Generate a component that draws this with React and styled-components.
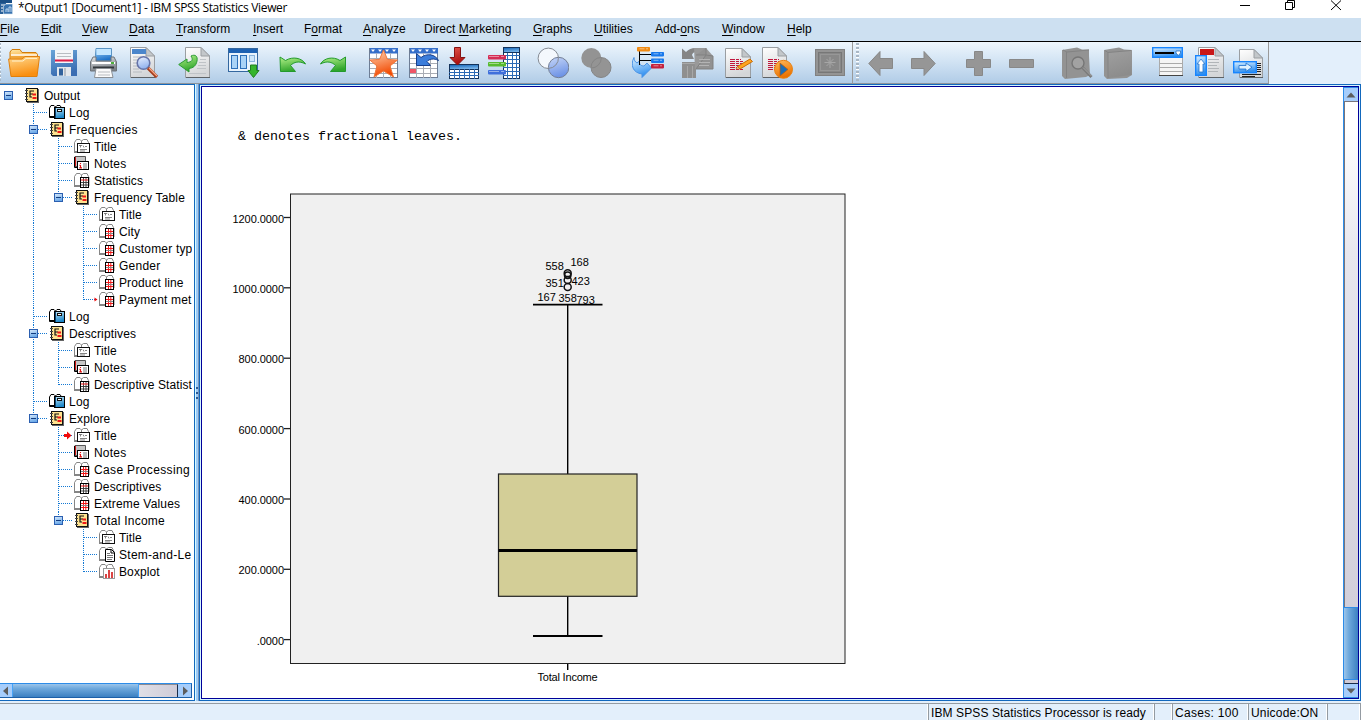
import React from "react";
import styled, { createGlobalStyle } from "styled-components";

const GlobalStyle = createGlobalStyle`
  html, body { margin: 0; padding: 0; background: #fff; overflow: hidden; }
  * { box-sizing: border-box; }
  svg { display: block; flex: none; }
`;

const Window = styled.div`
  width: 1361px;
  height: 720px;
  display: flex;
  flex-direction: column;
  overflow: hidden;
  background: #e3effb;
  font-family: "Liberation Sans", Arial, sans-serif;
  font-size: 12px;
  color: #000;
`;

const TitleBar = styled.header`
  height: 18px;
  flex: none;
  display: flex;
  background: #fff;
`;

const TitleText = styled.div`
  margin-left: 4px;
  flex: 1;
  font-family: "Open Sans", "Noto Sans", sans-serif;
  font-size: 12px;
  line-height: 16px;
  letter-spacing: -0.33px;
  white-space: nowrap;
`;

const MenuBar = styled.nav`
  height: 24px;
  flex: none;
  display: flex;
  background: #cde0f1;
  border-bottom: 1px solid #000;
`;

const MenuItem = styled.div`
  width: ${(p) => p.$w}px;
  flex: none;
  line-height: 23px;
  font-size: 12px;
  white-space: nowrap;
  u { text-underline-offset: 2px; text-decoration-thickness: 1px; text-decoration-skip-ink: none; }
`;

const ToolRow = styled.div`
  height: 42px;
  flex: none;
  display: flex;
`;

const ToolBar = styled.div`
  width: ${(p) => p.$w}px;
  height: 42px;
  flex: none;
  display: flex;
  padding-top: 5px;
  background: linear-gradient(#eef6fd, #d3e4f4 45%, #b1cce7);
  border-right: 1px solid #9a9a9a;
  border-bottom: 1px solid #8f9499;
  overflow: hidden;
`;

const Grip = styled.div`
  width: 3px;
  height: 38px;
  margin: -4px 0 0 ${(p) => p.$left}px;
  flex: none;
  background: repeating-linear-gradient(#a9b7c5 0 2px, #fff 2px 3px, transparent 3px 4px);
`;

const ToolButton = styled.div`
  width: 32px;
  height: 32px;
  flex: none;
  margin-left: ${(p) => p.$gap}px;
`;

const Workspace = styled.main`
  height: 617px;
  flex: none;
  display: flex;
`;

const OutlinePane = styled.aside`
  width: 195px;
  flex: none;
  display: flex;
  flex-direction: column;
  background: #fff;
  border: solid #1268bd;
  border-width: 1px 1px 1px 0;
  padding: 2px 2px 2px 0;
`;

const Tree = styled.div`
  flex: 1;
  overflow: hidden;
`;

const TreeRow = styled.div`
  height: 17px;
  display: flex;
  overflow: hidden;
`;

const IconCell = styled.div`
  width: ${(p) => (p.$root ? 20 : 20)}px;
  margin-left: -1px;
  flex: none;
`;

const Label = styled.div`
  font-size: 12px;
  line-height: 18px;
  letter-spacing: ${(p) => p.$ls}px;
  white-space: nowrap;
`;

const HScroll = styled.div`
  height: 15px;
  flex: none;
  display: flex;
  border: 1px solid #1b5fa8;
  border-top-color: #2d8ce8;
  border-left: 0;
`;

const ScrollButton = styled.div`
  flex: none;
  display: flex;
  align-items: center;
  justify-content: center;
  background: #a6cdfb;
`;

const HThumb = styled.div`
  width: 127px;
  flex: none;
  border: solid #47a3f7;
  border-width: 0 1px;
  background: linear-gradient(#9cc5ea, #6ea8dc 35%, #3c80c1);
`;

const HTrack = styled.div`
  flex: 1;
  border-top: 1px solid #8d8b92;
  border-right: 1px solid #1b2d49;
  background: linear-gradient(90deg, #e0dfe6, #cfcbd7);
`;

const Splitter = styled.div`
  width: 4px;
  flex: none;
  display: flex;
  flex-direction: column;
  justify-content: center;
  background: linear-gradient(90deg, #d9fbff 0 1px, #9ccaf8 1px 3px, #7795b9 3px);
`;

const ViewerPane = styled.section`
  flex: 1;
  display: flex;
  border: 1px solid #1268bd;
  padding: 1px;
  background: #d6f6ff;
`;

const ViewerFrame = styled.div`
  flex: 1;
  display: flex;
  border: 1px solid #000099;
  background: #fff;
`;

const Document = styled.div`
  flex: 1;
  padding: 42px 0 0 20px;
  overflow: hidden;
`;

const MonoLine = styled.pre`
  margin: 0 0 0 16px;
  height: 55px;
  font-family: "Liberation Mono", "Courier New", monospace;
  font-size: 13.33px;
  line-height: 16px;
`;

const VScroll = styled.div`
  width: 15px;
  flex: none;
  display: flex;
  flex-direction: column;
  border: 1px solid #2d8ce8;
  border-right-width: 0;
`;

const VTrack = styled.div`
  flex: ${(p) => (p.$h ? "none" : 1)};
  height: ${(p) => (p.$h ? p.$h + "px" : "auto")};
  border-left: 1px solid #77757c;
  border-top: ${(p) => (p.$h ? 0 : 1)}px solid #77757c;
  border-bottom: ${(p) => (p.$h ? 1 : 0)}px solid #1b2d49;
  background: ${(p) => (p.$h ? "#cfcbd7" : "linear-gradient(#fff 0 5%, #e8e7ee 30%, #d2cfda)")};
`;

const VThumb = styled.div`
  height: 73px;
  flex: none;
  border: solid #2d8ce8;
  border-width: 1px 0;
  background: linear-gradient(90deg, #9cc5ea, #6ea8dc 35%, #3c80c1);
`;

const StatusBar = styled.footer`
  height: 19px;
  flex: none;
  display: flex;
  padding-top: 2px;
`;

const StatusCell = styled.div`
  width: ${(p) => p.$w}px;
  flex: none;
  padding-left: 2px;
  border: solid #949ba2;
  border-width: 1px 0 0 ${(p) => (p.$first ? 0 : 1)}px;
  box-shadow: inset -1px 0 #fff;
  line-height: 18px;
  letter-spacing: ${(p) => p.$ls || 0}px;
  white-space: nowrap;
`;

const menus = [
  ["", "F", "ile", 41], ["", "E", "dit", 41], ["", "V", "iew", 47], ["", "D", "ata", 47],
  ["", "T", "ransform", 77], ["", "I", "nsert", 51], ["F", "o", "rmat", 59], ["", "A", "nalyze", 61],
  ["Direct ", "M", "arketing", 109], ["", "G", "raphs", 61], ["", "U", "tilities", 61],
  ["Add-", "o", "ns", 67], ["", "W", "indow", 65], ["", "H", "elp", 60],
];

const Gradients = styled.svg`
  position: absolute;
`;

const Defs = () => (
  <Gradients width="0" height="0" aria-hidden="true">
    <defs>
      {[
        ["gFolder", "#ffe9a8", "#f59312"], ["gFront", "#ffd98f", "#f98f10"], ["gBlue", "#a9d8fb", "#1f73c9"],
        ["gGreen", "#b6f28b", "#2fa52b"], ["gPaper", "#ffffff", "#d4d6d8"], ["gStar", "#ffd8b8", "#f24800"],
        ["gHead", "#0a5fb5", "#7db7ea"], ["gRed", "#e4574c", "#a90e0e"], ["gSave", "#6ba5d8", "#3a6db2"],
        ["gLens", "#eaf2ff", "#92b2ee"], ["gVenn", "#c7d7f8", "#6f94e6"], ["gOrange", "#ffb95a", "#ea7100"],
        ["gCyan", "#dff2ff", "#2f8ff0"], ["gGrey", "#a0a0a0", "#8c8c8c"], ["gPrint", "#e2e4e6", "#7b8187"],
        ["gBook", "#c9ecfb", "#1c86c8"], ["gTog", "#dcecfc", "#6aa8e8"],
      ].map(([id, a, b]) => (
        <linearGradient key={id} id={id} x1="0" y1="0" x2="0.3" y2="1">
          <stop offset="0" stopColor={a} />
          <stop offset="1" stopColor={b} />
        </linearGradient>
      ))}
    </defs>
  </Gradients>
);

const Svg = ({ children }) => <svg width="32" height="32" viewBox="0 0 32 32">{children}</svg>;

const Page = ({ x = 0, y = 0, w = 25, h = 31, f = 9 }) => (
  <g transform={`translate(${x} ${y})`} stroke="#9a9ea2" strokeWidth="1">
    <path d={`M.5 .5H${w - f}L${w - 0.5} ${f}V${h - 0.5}H.5Z`} fill="url(#gPaper)" />
    <path d={`M${w - f} .5V${f}H${w - 0.5}Z`} fill="#c3c7ca" />
    <path d={`M1 ${h - 0.5}H${w}`} stroke="#5d6266" />
  </g>
);

const Grid = ({ w = 29, h = 30 }) => (
  <g>
    <rect x=".5" y="1.5" width={w - 1} height={h - 1} fill="#fff" stroke="#6d7d95" />
    <rect x="1" y="1" width={w - 1} height="5.5" fill="#356fca" />
    <path d="M2 2.5h4l-2 2.5zM9 2.5h4l-2 2.5zM16 2.5h4l-2 2.5zM23 2.5h4l-2 2.5z" fill="#fff" />
    <path d="M1 11.5H28M1 16.5H28M1 21.5H28M1 26.5H28M7.5 6V31M14.5 6V31M21.5 6V31" stroke="#a9adb5" />
  </g>
);

const MiniTable = ({ x, y, w, h, cols, rows: lines }) => (
  <g>
    <rect x={x + 0.5} y={y + 0.5} width={w - 1} height={h - 1} fill="#fff" stroke="#14325a" />
    {cols.map((c) => <path key={"c" + c} d={`M${c + 0.5} ${y}V${y + h}`} stroke="#2c6ab5" />)}
    {lines.map((r) => <path key={"r" + r} d={`M${x} ${r + 0.5}H${x + w}`} stroke="#2c6ab5" />)}
  </g>
);

const Tag = ({ x, y, c }) => (
  <g>
    <rect x={x} y={y} width="13" height="4.4" rx=".8" fill={c} />
    <path d={`M${x + 2.5} ${y + 1.8}h5M${x + 9} ${y + 1.8}h2`} stroke="#fff" strokeOpacity=".6" strokeWidth=".8" />
  </g>
);

const RedText = ({ x, y }) => (
  <path
    d={[0, 2, 4, 6, 8, 10].map((d, i) => `M${x} ${y + d}h${[11, 13, 12, 14, 12, 13][i]}`).join("")}
    stroke="#c1163c"
    strokeWidth="1"
    strokeDasharray="5 1 3 1"
  />
);

const icons = {
  open: (
    <Svg>
      <path d="M2 14V5l2-2.5h8l2 3h14l1.5 2V16Z" fill="url(#gFolder)" stroke="#d17b09" />
      <path d="M3 8H29" stroke="#fff" strokeWidth="1.4" />
      <path d="M3 10H29" stroke="#e69322" />
      <path d="M.6 12H14l3-2.5h14.500L29 29.500H3Z" fill="url(#gFront)" stroke="#e07f0c" />
      <path d="M4 14H15l3-2.600h11" stroke="#fff2cf" fill="none" />
    </Svg>
  ),
  save: (
    <Svg>
      <path d="M1 3H27V29H3L1 27Z" fill="url(#gSave)" />
      <rect x="5" y="3" width="18" height="13" fill="#f4f6f8" />
      <path d="M7 6.500H21M7 9.500H21" stroke="#b9bdc2" />
      <path d="M5 13.500H23" stroke="#de1b45" strokeWidth="2" />
      <rect x="7" y="20" width="14" height="9" fill="#e4e8ec" />
      <rect x="9" y="21.500" width="4" height="7" fill="#31629c" />
      <path d="M15 21v8" stroke="#b8bfc7" strokeWidth="2" />
    </Svg>
  ),
  print: (
    <Svg>
      <path d="M7 1.500H22.500V14H6Z" fill="url(#gBlue)" stroke="#5b94c4" />
      <path d="M7.500 2H22V8H7.500Z" fill="#c3e6ff" />
      <path d="M4 10h3v4h15v-4h3l2.500 5v9H1.500V15Z" fill="url(#gPrint)" stroke="#6c7278" />
      <path d="M3 16H26" stroke="#fff" strokeWidth="2" />
      <path d="M4 20.500H25" stroke="#33383c" strokeWidth="2" />
      <path d="M7 21.500H22L24 30.500H5.500Z" fill="#fafafa" stroke="#8b9095" />
      <path d="M9 25H21M9 28H21" stroke="#b8bcc0" />
      <rect x="22" y="15" width="3" height="2" fill="#4caf3c" />
    </Svg>
  ),
  preview: (
    <Svg>
      <Page x={1} y={0} w={25} h={31} />
      <rect x="3" y="2" width="14" height="5" fill="#4b86cb" />
      <path d="M4 10H12M4 13H9M4 16H8M4 19H9M4 22H10M4 25H13" stroke="#b6bbc0" />
      <circle cx="14.500" cy="16" r="6.300" fill="url(#gLens)" stroke="#6674a8" strokeWidth="1.600" />
      <path d="M19 21L28 30" stroke="#a63c1c" strokeWidth="3.200" />
      <path d="M20 21L28 29" stroke="#f4a987" strokeWidth="1.200" />
    </Svg>
  ),
  exportDoc: (
    <Svg>
      <Page x={7} y={0} w={25} h={31} />
      <path d="M22 12.500H28M21 15.500H28M20 18.500H28M19 21.500H28M11 26.500H28" stroke="#bfc3c7" />
      <path d="M13 9C17 7 20 9 19 14C18 19 15 21 11 21.500V25L.7 17.500L9 12V15.500C14 15 15.500 13 13 9Z" fill="url(#gGreen)" stroke="#2c9a34" />
    </Svg>
  ),
  dialog: (
    <Svg>
      <rect x=".500" y="1.500" width="29" height="23" fill="#e8f3fd" stroke="#34679f" />
      <rect x="1" y="2" width="28" height="4" fill="#1d62b3" />
      <rect x="3.500" y="8.500" width="6" height="13" fill="#a9d3f7" stroke="#2c6fb9" />
      <rect x="12.500" y="8.500" width="6" height="13" fill="#a9d3f7" stroke="#2c6fb9" />
      <rect x="21.500" y="8.500" width="5" height="6" fill="#cfe7fb" stroke="#8ab4dc" />
      <path d="M22.500 18H28.500V23.500H31L25.500 30.500L20 23.500H22.500Z" fill="#35b52d" stroke="#217f1f" />
    </Svg>
  ),
  undo: (
    <Svg><path d="M1 10L6.500 13.500C14 9 23 11 26.500 17C20 13.500 15 15 11.500 18.500L16.500 24.500H1.500Z" fill="url(#gGreen)" stroke="#239a2c" /></Svg>
  ),
  redo: (
    <Svg><path d="M25.500 10L20 13.500C13 9 4 11 .5 17C7 13.500 12 15 15.500 18.500L10.500 24.500H25.500Z" fill="url(#gGreen)" stroke="#239a2c" /></Svg>
  ),
  star: (
    <Svg><Grid /><path d="M14.500 3L18.500 12.500L28.500 13L21 19L24.500 30L14.500 24L5 30L8 19L.8 13L10.500 12.500Z" fill="url(#gStar)" stroke="#f0763a" /></Svg>
  ),
  goto: (
    <Svg>
      <Grid />
      <rect x="1" y="22" width="6" height="4" fill="#ef5566" />
      <path d="M7.500 6.500L12 10.500C18 6 26 7 29.500 13.500C25 11 20 12 18 14.500L21.500 18.500H7.500Z" fill="#3b7ddb" stroke="#173f8c" />
    </Svg>
  ),
  down: (
    <Svg>
      <rect x=".5" y="17.500" width="29" height="5" fill="url(#gHead)" stroke="#14325a" />
      <MiniTable x={0} y={22} w={30} h={10} cols={[5, 10, 15, 20, 25]} rows={[25, 28]} />
      <path d="M5.500 .5H11.500V10.500H16L8.500 18L1 10.500H5.500Z" fill="url(#gRed)" stroke="#861212" />
    </Svg>
  ),
  vars: (
    <Svg>
      <MiniTable x={15} y={4} w={17} h={28} cols={[19, 24, 28]} rows={[8, 12, 16, 20, 24, 28]} />
      <rect x="15.500" y=".5" width="16" height="5" fill="url(#gHead)" stroke="#14325a" />
      {[["#d42d55", 8], ["#57bb2f", 15], ["#3f6fdb", 23]].map(([c, y]) => (
        <g key={y}>
          <rect x="0" y={y} width="18" height="4.500" rx="1" fill={c} />
          <path d={`M1 ${y + 1.5}H11M13 ${y + 1.5}h3`} stroke="#fff" strokeOpacity=".45" />
        </g>
      ))}
    </Svg>
  ),
  venn: (
    <Svg>
      <circle cx="11.300" cy="11.300" r="10.200" fill="#f4f8fd" stroke="#858b94" />
      <circle cx="21.600" cy="20.500" r="10.200" fill="url(#gVenn)" stroke="#737e94" />
      <path d="M21.400 10.300A10.200 10.200 0 0 1 11.400 21.400" fill="none" stroke="#858b94" />
    </Svg>
  ),
  vennOff: (
    <Svg>
      <circle cx="10.300" cy="11" r="10" fill="#939393" />
      <circle cx="20" cy="20.500" r="10" fill="#949494" stroke="#858585" />
      <path d="M20.300 11A10 10 0 0 1 10.300 21" fill="none" stroke="#858585" />
    </Svg>
  ),
  sets: (
    <Svg>
      <path d="M2 10.500C-2 18 1 26 10 27V30.500L19.500 21L15 16L12 19C9 19 7 17.500 7.500 14L5 16C3 15 2 13 2 10.500Z" fill="url(#gCyan)" stroke="#4a93e6" />
      <path d="M7.500 4V18M7 7.500H19M7 13.500H19" stroke="#000" fill="none" />
      <Tag x={5} y={0} c="#f08a12" /><Tag x={19} y={5} c="#1778ec" /><Tag x={19} y={11.5} c="#1778ec" /><Tag x={19} y={17} c="#c4203c" />
    </Svg>
  ),
  scriptOff: (
    <Svg>
      <path d="M0 1.500L4 5C9 0 16 0 20 4C14 4 11 5 10 8L12 12H0Z" fill="#858585" />
      <path d="M0 15H14V31H0Z" fill="#8f8f8f" />
      <path d="M5.500 19V31M10.500 19V31M0 16.500H13" stroke="#a8a8a8" />
      <path d="M12 1H24L31 9V22H13Z" fill="#999" />
      <path d="M14 8H24V1M24 8L31 9V22H14Z" fill="#929292" stroke="#818181" />
      <path d="M17 12.500H28M17 15.500H28M17 18.500H27" stroke="#b4b4b4" />
    </Svg>
  ),
  edit: (
    <Svg>
      <Page x={0} y={1} w={26} h={30} />
      <RedText x={5} y={12.5} />
      <path d="M12.500 19.500L25 12L27.500 14.500L15 22Z" fill="#ffa41e" stroke="#c96c05" />
      <path d="M11 22L12.500 19.500L15 22Z" fill="#ffdf9c" stroke="#b55d10" strokeWidth=".6" />
    </Svg>
  ),
  run: (
    <Svg>
      <Page x={0} y={0} w={25} h={31} />
      <RedText x={6} y={12.5} />
      <circle cx="21.500" cy="22.300" r="9" fill="url(#gOrange)" stroke="#e98212" />
      <path d="M18 16L26 22.500L18 29Z" fill="#1d6db4" stroke="#c75c00" strokeWidth=".7" />
    </Svg>
  ),
  screenOff: (
    <Svg>
      <rect x=".5" y="2.500" width="29" height="26" fill="#949494" stroke="#808080" />
      <rect x="3.500" y="5.500" width="23" height="20" fill="#888" stroke="#777" />
      <rect x="5.500" y="7.500" width="19" height="16" fill="none" stroke="#979797" />
      <path d="M15 10V21M9.500 15.500H20.500M11.500 12L18.500 19M18.500 12L11.500 19" stroke="#a6a6a6" />
    </Svg>
  ),
  left: <Svg><path d="M.8 16.500L12 4.500V11.500H24.500V21.500H12V28.500Z" fill="#969696" stroke="#888" /></Svg>,
  right: <Svg><path d="M24.200 16.500L13 4.500V11.500H.5V21.500H13V28.500Z" fill="#969696" stroke="#888" /></Svg>,
  plus: <Svg><path d="M8.500 4.500H16.500V12.500H24.500V20.500H16.500V28.500H8.500V20.500H.5V12.500H8.500Z" fill="#969696" stroke="#888" /></Svg>,
  minus: <Svg><path d="M.5 12.500H24.500V20.500H.5Z" fill="#969696" stroke="#888" /></Svg>,
  bookFind: (
    <Svg>
      <path d="M0 3L15 .5L20 2.500H27V9L28 28L24 30L3 32L0 29Z" fill="#939393" />
      <path d="M4.500 5V31M1 3L5 5L27 3" stroke="#838383" fill="none" />
      <circle cx="16" cy="16" r="6" fill="#a2a2a2" stroke="#767676" strokeWidth="1.400" />
      <path d="M20.500 20.500L29.500 30" stroke="#7b7b7b" strokeWidth="3" />
      <path d="M21 20.500L29.500 29" stroke="#a5a5a5" />
    </Svg>
  ),
  book: (
    <Svg>
      <path d="M0 3L15 .5L20 2.500L28 3V28L23 31L3 32L0 29Z" fill="#939393" />
      <path d="M4 5.500L27.500 3V28L4 31Z" fill="url(#gGrey)" />
      <path d="M4 5.500V31M1 3.500L4 5.500L27 3.500" stroke="#838383" fill="none" />
    </Svg>
  ),
  list: (
    <Svg>
      <rect x="7.500" y="10.500" width="23" height="18" fill="#f5f5f5" stroke="#aaa" />
      <path d="M8 16.500H30M8 20.500H30M8 24.500H30" stroke="#aaa" />
      <path d="M7 28.500H31" stroke="#444" />
      <rect x=".7" y=".7" width="29.600" height="9.600" fill="url(#gCyan)" stroke="#1785ff" strokeWidth="1.400" />
      <path d="M3 6H22" stroke="#000" strokeWidth="2" />
      <path d="M24 4H28.500V6L26.300 8.500L24 6Z" fill="#fff" stroke="#1463b8" strokeWidth=".7" />
    </Svg>
  ),
  pageUp: (
    <Svg>
      <Page x={3} y={0} w={26} h={31} />
      <rect x="5" y="2" width="14" height="6" fill="#c91717" />
      <path d="M13 12.500H24M13 15.500H24M13 18.500H22M13 21.500H24M13 24.500H23" stroke="#b1b5b8" />
      <rect x=".7" y="8.700" width="10.600" height="19.600" fill="url(#gCyan)" stroke="#1785ff" strokeWidth="1.400" />
      <path d="M6 12L10 17H8V25H4V17H2Z" fill="#fff" stroke="#2574cc" strokeWidth=".8" />
    </Svg>
  ),
  pageInsert: (
    <Svg>
      <Page x={6} y={2} w={24} h={29} />
      <path d="M24 16.500H28M24 18.500H28M24 20.500H28M24 22.500H28M24 24.500H28M9 27.500H28M9 29.500H22" stroke="#222" />
      <rect x=".7" y="14.700" width="22.600" height="11" fill="url(#gCyan)" stroke="#1785ff" strokeWidth="1.400" />
      <path d="M6 18.500H13V16L19 20.200L13 24.500V22H6Z" fill="#dff1ff" stroke="#1c6fcc" strokeWidth=".8" />
    </Svg>
  ),
};

const mainTools = [
  ["open", 8], ["save", 50], ["print", 89], ["preview", 129], ["exportDoc", 178], ["dialog", 228],
  ["undo", 279], ["redo", 320], ["star", 369], ["goto", 409], ["down", 449], ["vars", 488],
  ["venn", 537], ["vennOff", 581], ["sets", 632], ["scriptOff", 682], ["edit", 725], ["run", 762], ["screenOff", 815],
];
const outlineTools = [
  ["left", 868], ["right", 911], ["plus", 966], ["minus", 1009], ["bookFind", 1062],
  ["book", 1104], ["list", 1152], ["pageUp", 1195], ["pageInsert", 1233],
];

const Tools = ({ items, start }) =>
  items.map(([name, x], i) => (
    <ToolButton key={name} $gap={i ? x - items[i - 1][1] - 32 : x - start}>{icons[name]}</ToolButton>
  ));

const GreyBook = () => (
  <g>
    <path d="M.5 13.500V4.500L2.500 1.500H6L7.500 3L9.500 1.500H13L14.500 4.500V13.500Z" fill="#fff" stroke="#858585" />
    <path d="M7.500 3V12" stroke="#858585" />
    <path d="M0 14H6" stroke="#858585" strokeWidth="2" />
    <path d="M14.500 5V14" stroke="#858585" strokeWidth="2" />
  </g>
);

const treeIcons = {
  folder: (
    <g>
      <rect x="3" y="2" width="12" height="14" fill="#666" />
      <rect x="2.500" y="1.500" width="11" height="13" fill="#ffe38f" stroke="#111" />
      <path d="M1 3.500H4M1 6.500H4M1 9.500H4M1 12.500H4" stroke="#444" />
      <path d="M6 3.500V10.500M5.500 4H10M5.500 7H9M5.500 10H8" stroke="#111" strokeWidth="1.200" fill="none" />
      <path d="M8.500 7.500H12M8.500 11H12.500" stroke="#f01818" strokeWidth="2" />
    </g>
  ),
  log: (
    <g>
      <path d="M.5 13.500V4L2 1.500H5L6.500 3L8 1.500H11L12 3V13.500Z" fill="#fff" stroke="#000" />
      <path d="M1 13H6" stroke="#000" strokeWidth="2" />
      <rect x="5.500" y="3.500" width="10" height="11" fill="url(#gBook)" stroke="#000" />
      <path d="M6.500 4V14" stroke="#0a4474" />
      <rect x="8.500" y="5.500" width="4" height="2" fill="#fff" stroke="#111" />
    </g>
  ),
  title: (
    <g>
      <GreyBook />
      <rect x="3.500" y="5.500" width="12" height="9" fill="#fff" stroke="#111" />
      <path d="M5 7.500h3M6.500 7.500v2M9 7.500l1 2M11 8.500h2M6 11.500H13M6 13H11" stroke="#666" strokeWidth=".8" fill="none" />
    </g>
  ),
  notes: (
    <g>
      <path d="M1 1.500H11.500V11.500H1Z" fill="#c6c6c6" stroke="#555" />
      <path d="M.5 2V12.500H4" stroke="#000" fill="none" />
      <path d="M1.500 2V11" stroke="#d21818" />
      <rect x="3.500" y="6.500" width="11" height="8" fill="#fff" stroke="#000" />
      <path d="M6.500 8V9M6.500 10V13M5.300 12.900H8M5.300 10.300H6.500" stroke="#e01010" strokeWidth="1.100" fill="none" />
      <path d="M9 9H13M9 11H13M9 13H13" stroke="#777" />
    </g>
  ),
  table: (
    <g>
      <GreyBook />
      <rect x="6.500" y="5.500" width="8" height="10" fill="#fff" stroke="#000" />
      <path d="M7 8.500H14M7 12.500H14M9.500 6V15M11.800 6V15" stroke="#f01818" />
      <path d="M7 10.500H14" stroke="#888" />
    </g>
  ),
  table2: (
    <g>
      <GreyBook />
      <rect x="6.500" y="5.500" width="8" height="10" fill="#fff" stroke="#000" />
      <path d="M7 10.500H14M7 13H14M9.500 6V15M12 6V15" stroke="#333" strokeWidth=".9" />
      <path d="M7 8H14" stroke="#f01818" />
    </g>
  ),
  text: (
    <g>
      <GreyBook />
      <path d="M6.500 3.500H12.500L15.500 6.500V15.500H6.500Z" fill="#fff" stroke="#000" />
      <path d="M12 3.500V7H15.500" stroke="#000" fill="none" />
      <path d="M8 7.500H11M8 9.500H14M8 11.500H14M8 13.500H13" stroke="#777" />
    </g>
  ),
  chart: (
    <g>
      <GreyBook />
      <rect x="4.500" y="5.500" width="11" height="10" fill="#fff" stroke="#999" />
      <path d="M7 15V11M10 15V7M13 15V9" stroke="#d83030" strokeWidth="1.800" />
    </g>
  ),
};

// [depth, icon, label, options]
const rows = [
  [0, "folder", "Output", { open: true, ls: 0 }],
  [1, "log", "Log", { ls: 0.25 }],
  [1, "folder", "Frequencies", { open: true, ls: 0.25 }],
  [2, "title", "Title"],
  [2, "notes", "Notes", { ls: 0.2 }],
  [2, "table2", "Statistics"],
  [2, "folder", "Frequency Table", { open: true, last: true, ls: 0.17 }],
  [3, "title", "Title"],
  [3, "table", "City"],
  [3, "table", "Customer typ", { ls: 0.17 }],
  [3, "table", "Gender", { ls: 0.25 }],
  [3, "table", "Product line"],
  [3, "table", "Payment met", { last: true, arrow: "small", ls: 0.17 }],
  [1, "log", "Log", { ls: 0.25 }],
  [1, "folder", "Descriptives", { open: true, ls: 0.15 }],
  [2, "title", "Title"],
  [2, "notes", "Notes", { ls: 0.2 }],
  [2, "table2", "Descriptive Statist", { last: true }],
  [1, "log", "Log", { ls: 0.25 }],
  [1, "folder", "Explore", { open: true, last: true }],
  [2, "title", "Title", { arrow: "big" }],
  [2, "notes", "Notes", { ls: 0.2 }],
  [2, "table", "Case Processing", { ls: 0.35 }],
  [2, "table2", "Descriptives", { ls: 0.17 }],
  [2, "table", "Extreme Values", { ls: 0.17 }],
  [2, "folder", "Total Income", { open: true, last: true, ls: 0.25 }],
  [3, "title", "Title"],
  [3, "text", "Stem-and-Le", { ls: 0.27 }],
  [3, "chart", "Boxplot", { last: true }],
];

const continues = (index, depth) => {
  for (let i = index + 1; i < rows.length; i++) {
    if (rows[i][0] === depth) return true;
    if (rows[i][0] < depth) return false;
  }
  return false;
};

const Connector = ({ own, root, through, open, arrow }) => (
  <svg width="25" height="17" viewBox="0 0 25 17">
    <g stroke="#1479d4" strokeDasharray="1 1" fill="none">
      {!root && (through || own) && <path d={own && !through ? "M8.500 0V9" : "M8.500 0V17"} />}
      {own && !root && <path d="M9 8.500H23" />}
    </g>
    {open && (
      <g>
        <rect x="4.500" y="4.500" width="8" height="8" fill="url(#gTog)" stroke="#2b5fb0" />
        <path d="M6 8.500H11" stroke="#123c80" />
      </g>
    )}
    {arrow === "big" && <path d="M14 7H17V4.500L21.500 8.500L17 12.500V10H14Z" fill="#f00a0a" />}
    {arrow === "small" && <path d="M19.500 6.500L22.500 8.500L19.500 10.500Z" fill="#f00a0a" />}
  </svg>
);

const Outline = () =>
  rows.map(([depth, icon, label, opt = {}], i) => (
    <TreeRow key={i}>
      {Array.from({ length: depth + 1 }, (_, d) => (
        <Connector
          key={d}
          root={d === 0}
          own={d === depth}
          through={d > 0 && continues(i, d)}
          open={d === depth && opt.open}
          arrow={d === depth ? opt.arrow : undefined}
        />
      ))}
      <IconCell>
        <svg width="18" height="17" viewBox="0 0 18 17">{treeIcons[icon]}</svg>
      </IconCell>
      <Label $ls={opt.ls ?? 0.1}>{label}</Label>
    </TreeRow>
  ));

const ticks = [
  [217.5, "1200.0000"], [287.8, "1000.0000"], [358.2, "800.0000"], [428.6, "600.0000"],
  [499, "400.0000"], [569.3, "200.0000"], [639.6, ".0000"],
];
const outlierLabels = [
  [545.5, 270, "558"], [570.5, 266, "168"], [545.5, 287, "351"], [571.5, 285, "423"],
  [537.5, 301, "167"], [558.5, 302, "358"], [576.5, 304, "793"],
];

const Boxplot = () => (
  <svg width="634" height="505" viewBox="222 184 634 505" fontFamily="Liberation Sans, Arial, sans-serif" fontSize="11">
    <rect x="290.500" y="194" width="554.500" height="469.500" fill="#f0f0f0" stroke="#222" />
    {ticks.map(([y, t]) => (
      <g key={t}>
        <path d={`M284 ${y}H290`} stroke="#222" strokeWidth="1.300" />
        <text x="284" y={y + 5} textAnchor="end" letterSpacing="-0.05">{t}</text>
      </g>
    ))}
    <path d="M567.700 305V474M567.700 596V636M567.700 664V670" stroke="#000" strokeWidth="1.400" />
    <path d="M533 304.700H602.500M533 636H602.500" stroke="#000" strokeWidth="1.800" />
    <rect x="498.500" y="474" width="138.500" height="122.300" fill="#d3ce97" stroke="#222" strokeWidth="1.200" />
    <path d="M498.500 550.500H637" stroke="#000" strokeWidth="3" />
    <g fill="none" stroke="#111" strokeWidth="1.500">
      <circle cx="567.700" cy="273.300" r="3.500" />
      <circle cx="567.700" cy="275.300" r="3.200" />
      <circle cx="567.700" cy="280" r="3.500" />
      <circle cx="567.700" cy="287" r="3.500" />
    </g>
    {outlierLabels.map(([x, y, t]) => <text key={t} x={x} y={y}>{t}</text>)}
    <text x="567.500" y="681" textAnchor="middle" letterSpacing="-0.2">Total Income</text>
  </svg>
);

const Arrow = ({ dir }) => (
  <svg width="10" height="10" viewBox="0 0 10 10">
    <path
      d={{ left: "M2 5L7 .5V9.500Z", right: "M8 5L3 .5V9.500Z", up: "M5 2.500L9.500 7.500H.5Z", down: "M5 7.500L9.500 2.500H.5Z" }[dir]}
      fill="#5d5d5d"
    />
  </svg>
);

const LeftButton = styled(ScrollButton)`width: 12px;`;
const RightButton = styled(ScrollButton)`width: 13px;`;
const VerticalButton = styled(ScrollButton)`height: 13px;`;

export default function App() {
  return (
    <>
      <GlobalStyle />
      <Defs />
      <Window>
        <TitleBar>
          <svg width="14" height="15" viewBox="0 0 14 15">
            <path d="M0 0H12V3H0Z" fill="#1b4f86" />
            <path d="M0 3H6V14H0Z" fill="#2a6099" />
            <path d="M1 5H5M1 8H3M1 11H3" stroke="#fff" />
            <path d="M3.500 6L6 4H12.500V14H3.500Z" fill="#3873b0" stroke="#d7e5f2" strokeWidth=".6" />
            <path d="M6 12V9H8V12M9 12V7H11V12" stroke="#bcd6ee" fill="none" />
          </svg>
          <TitleText>*Output1 [Document1] - IBM SPSS Statistics Viewer</TitleText>
          <svg width="121" height="18" viewBox="1240 0 121 18" fill="none" stroke="#000">
            <path d="M1240 5.500H1250M1285.500 2.500H1292.500V9.500H1285.500ZM1287.500 2.500V.5H1294.500V7.500H1292.500" />
            <path d="M1331 .5L1341 10M1341 .5L1331 10" />
          </svg>
        </TitleBar>
        <MenuBar>
          {menus.map(([a, b, c, w]) => (
            <MenuItem key={a + b + c} $w={w}>{a}<u>{b}</u>{c}</MenuItem>
          ))}
        </MenuBar>
        <ToolRow>
          <ToolBar $w={853}>
            <Grip $left={-2} />
            <Tools items={mainTools} start={1} />
          </ToolBar>
          <ToolBar $w={416}>
            <Grip $left={3} />
            <Tools items={outlineTools} start={859} />
          </ToolBar>
        </ToolRow>
        <Workspace>
          <OutlinePane>
            <Tree><Outline /></Tree>
            <HScroll>
              <LeftButton><Arrow dir="left" /></LeftButton>
              <HThumb />
              <HTrack />
              <RightButton><Arrow dir="right" /></RightButton>
            </HScroll>
          </OutlinePane>
          <Splitter>
            <svg width="4" height="16" viewBox="0 0 4 16"><path d="M1 2h2v2H1zM1 7h2v2H1zM1 12h2v2H1z" fill="#2c5a96" /></svg>
          </Splitter>
          <ViewerPane>
            <ViewerFrame>
              <Document>
                <MonoLine>{"& denotes fractional leaves."}</MonoLine>
                <Boxplot />
              </Document>
              <VScroll>
                <VerticalButton><Arrow dir="up" /></VerticalButton>
                <VTrack />
                <VThumb />
                <VTrack $h={4} />
                <VerticalButton><Arrow dir="down" /></VerticalButton>
              </VScroll>
            </ViewerFrame>
          </ViewerPane>
        </Workspace>
        <StatusBar>
          <StatusCell $w={928} $first />
          <StatusCell $w={226} $ls={0.11}>IBM SPSS Statistics Processor is ready</StatusCell>
          <StatusCell $w={18} />
          <StatusCell $w={76} $ls={0.3}>Cases: 100</StatusCell>
          <StatusCell $w={79} $ls={0.2}>Unicode:ON</StatusCell>
          <StatusCell $w={33} />
          <StatusCell $w={1} />
        </StatusBar>
      </Window>
    </>
  );
}
